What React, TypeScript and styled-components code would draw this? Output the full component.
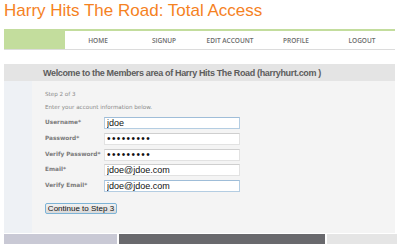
import { Fragment } from "react";
import styled, { createGlobalStyle } from "styled-components";

const GlobalStyle = createGlobalStyle`
  html, body {
    margin: 0;
    padding: 0;
    background: #fff;
  }
  body {
    font-family: "Liberation Sans", Arial, sans-serif;
  }
`;

const Page = styled.div`
  width: 400px;
  padding: 0 5px 0 4px;
  box-sizing: border-box;
`;

const Title = styled.h1`
  margin: 0 0 8px;
  padding-top: 1px;
  font-family: "Liberation Sans", Arial, sans-serif;
  font-weight: normal;
  font-size: 17px;
  line-height: 20px;
  color: #f5821f;
`;

const Nav = styled.nav`
  display: grid;
  grid-template-columns: 61px repeat(5, 1fr);
  height: 18px;
  border-top: 2px solid #c3dd9d;
  border-bottom: 1px solid #dcdcdc;
`;

const NavBlock = styled.div`
  background: #c3dd9d;
`;

const NavItem = styled.a`
  display: flex;
  align-items: center;
  justify-content: center;
  font-family: "Open Sans", sans-serif;
  font-size: 6.5px;
  font-weight: 600;
  color: #6b6b6b;
  text-decoration: none;
  text-transform: uppercase;
`;

const WelcomeBar = styled.div`
  margin-top: 14px;
  height: 17px;
  background: #e4e4e4;
  padding-left: 39px;
  display: flex;
  align-items: center;
  font-family: "Liberation Sans", Arial, sans-serif;
  font-weight: bold;
  font-size: 9px;
  letter-spacing: -0.35px;
  color: #5c5c5c;
`;

const Body = styled.div`
  display: grid;
  grid-template-columns: 28px 1fr;
  height: 152px;
  background: #f4f4f4;
`;

const SideColumn = styled.div`
  background: #eef1f5;
`;

const Content = styled.div`
  padding: 9px 0 0 13px;
`;

const Note = styled.p`
  margin: 0 0 5px;
  font-family: "DejaVu Sans", Verdana, sans-serif;
  font-size: 5.6px;
  line-height: 8px;
  color: #8a8a8a;
`;

const Form = styled.form`
  margin-top: 6px;
  display: grid;
  grid-template-columns: 59px 136px;
  row-gap: 3.75px;
  align-items: center;
`;

const Label = styled.label`
  font-family: "DejaVu Sans", Verdana, sans-serif;
  font-weight: bold;
  font-size: 5.8px;
  color: #7a7a7a;
  align-self: start;
  padding-top: 2px;
  white-space: nowrap;
`;

const Input = styled.input<{ $focus?: boolean }>`
  box-sizing: border-box;
  width: 136px;
  height: 12px;
  margin: 0;
  padding: 0 2px;
  border: 1px solid ${(p) => (p.$focus ? "#b4cde2" : "#e2e2e2")};
  border-top-color: ${(p) => (p.$focus ? "#9fbdd8" : "#cfcfcf")};
  background: #fff;
  font-family: "Liberation Sans", Arial, sans-serif;
  font-size: 9px;
  color: #111;
  outline: none;

  &[type="password"] {
    letter-spacing: 1.4px;
    font-size: 10px;
  }
`;

const Button = styled.button`
  margin-top: 11px;
  width: 72px;
  height: 11px;
  padding: 0;
  border: 1px solid #7cb3d6;
  border-radius: 2px;
  background: linear-gradient(#f2f2f2, #d9d9d9);
  font-family: "Liberation Sans", Arial, sans-serif;
  font-size: 8px;
  line-height: 9px;
  color: #111;
`;

const Footer = styled.div`
  display: grid;
  grid-template-columns: 113px 206px 1fr;
  column-gap: 2px;
  height: 10px;
  margin-top: 1px;
  margin-right: -2px;
`;

const FooterBar = styled.div<{ $color: string }>`
  background: ${(p) => p.$color};
`;

const fields = [
  { label: "Username*", type: "text", value: "jdoe", focus: true },
  { label: "Password*", type: "password", value: "123456789" },
  { label: "Verify Password*", type: "password", value: "123456789" },
  { label: "Email*", type: "text", value: "jdoe@jdoe.com" },
  { label: "Verify Email*", type: "text", value: "jdoe@jdoe.com", focus: true },
];

export default function App() {
  return (
    <>
      <GlobalStyle />
      <Page>
        <Title>Harry Hits The Road: Total Access</Title>
        <Nav>
          <NavBlock />
          <NavItem>Home</NavItem>
          <NavItem>Signup</NavItem>
          <NavItem>Edit Account</NavItem>
          <NavItem>Profile</NavItem>
          <NavItem>Logout</NavItem>
        </Nav>
        <WelcomeBar>
          Welcome to the Members area of Harry Hits The Road (harryhurt.com )
        </WelcomeBar>
        <Body>
          <SideColumn />
          <Content>
            <Note>Step 2 of 3</Note>
            <Note>Enter your account information below.</Note>
            <Form onSubmit={(e) => e.preventDefault()}>
              {fields.map((f) => (
                <Fragment key={f.label}>
                  <Label>{f.label}</Label>
                  <Input type={f.type} value={f.value} readOnly $focus={f.focus} />
                </Fragment>
              ))}
            </Form>
            <Button type="button">Continue to Step 3</Button>
          </Content>
        </Body>
        <Footer>
          <FooterBar $color="#c9c9d5" />
          <FooterBar $color="#69696d" />
          <FooterBar $color="#e5e5e5" />
        </Footer>
      </Page>
    </>
  );
}
